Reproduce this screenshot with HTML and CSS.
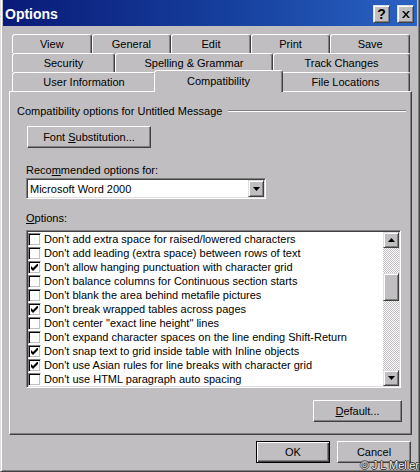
FILE: index.html
```html
<!DOCTYPE html>
<html lang="en">
<head>
  <meta charset="UTF-8" />
  <title>Options</title>
  <link rel="stylesheet" href="styles.css">
</head>
<body>
  <div class="window">
    <div class="titlebar">
      <span class="title">Options</span>
      <div class="caption-buttons">
        <div class="cap-btn help">?</div>
        <div class="cap-btn">
          <svg width="8" height="7" viewBox="0 0 8 7"><path d="M0 0h2l2 2.5l2-2.5h2l-3 3.5l3 3.5h-2l-2-2.5l-2 2.5h-2l3-3.5z"/></svg>
        </div>
      </div>
    </div>

    <div class="content">
      <div class="tabs">
        <div class="tab-row row-top">
          <div class="tab">View</div>
          <div class="tab">General</div>
          <div class="tab">Edit</div>
          <div class="tab">Print</div>
          <div class="tab">Save</div>
        </div>
        <div class="tab-row row-mid">
          <div class="tab">Security</div>
          <div class="tab">Spelling &amp; Grammar</div>
          <div class="tab">Track Changes</div>
        </div>
        <div class="tab-row row-bottom">
          <div class="tab">User Information</div>
          <div class="tab active">Compatibility</div>
          <div class="tab">File Locations</div>
        </div>
      </div>

      <div class="panel">
        <div class="group-title">
          <span>Compatibility options for Untitled Message</span>
          <span class="rule"></span>
        </div>

        <div class="btn btn-font"><span>Font <u>S</u>ubstitution...</span></div>

        <div class="field-label label-rec">Reco<u>m</u>mended options for:</div>
        <div class="combo">
          <span class="combo-text">Microsoft Word 2000</span>
          <span class="combo-btn">
            <svg width="7" height="4" viewBox="0 0 7 4"><polygon points="0,0 7,0 3.5,4"/></svg>
          </span>
        </div>

        <div class="field-label label-opts"><u>O</u>ptions:</div>
        <div class="listbox">
          <ul class="opt-list">
            <li><span class="checkbox"></span><span>Don't add extra space for raised/lowered characters</span></li>
            <li><span class="checkbox"></span><span>Don't add leading (extra space) between rows of text</span></li>
            <li><span class="checkbox checked"><svg width="7" height="7" viewBox="0 0 7 7"><polygon points="0,2 2,4 6,0 7,0 7,2 2,7 0,5"/></svg></span><span>Don't allow hanging punctuation with character grid</span></li>
            <li><span class="checkbox"></span><span>Don't balance columns for Continuous section starts</span></li>
            <li><span class="checkbox"></span><span>Don't blank the area behind metafile pictures</span></li>
            <li><span class="checkbox checked"><svg width="7" height="7" viewBox="0 0 7 7"><polygon points="0,2 2,4 6,0 7,0 7,2 2,7 0,5"/></svg></span><span>Don't break wrapped tables across pages</span></li>
            <li><span class="checkbox"></span><span>Don't center "exact line height" lines</span></li>
            <li><span class="checkbox"></span><span>Don't expand character spaces on the line ending Shift-Return</span></li>
            <li><span class="checkbox checked"><svg width="7" height="7" viewBox="0 0 7 7"><polygon points="0,2 2,4 6,0 7,0 7,2 2,7 0,5"/></svg></span><span>Don't snap text to grid inside table with Inline objects</span></li>
            <li><span class="checkbox checked"><svg width="7" height="7" viewBox="0 0 7 7"><polygon points="0,2 2,4 6,0 7,0 7,2 2,7 0,5"/></svg></span><span>Don't use Asian rules for line breaks with character grid</span></li>
            <li><span class="checkbox"></span><span>Don't use HTML paragraph auto spacing</span></li>
          </ul>
          <div class="scrollbar">
            <div class="sb-btn">
              <svg width="7" height="4" viewBox="0 0 7 4"><polygon points="0,4 7,4 3.5,0"/></svg>
            </div>
            <div class="sb-track">
              <div class="sb-thumb"></div>
            </div>
            <div class="sb-btn">
              <svg width="7" height="4" viewBox="0 0 7 4"><polygon points="0,0 7,0 3.5,4"/></svg>
            </div>
          </div>
        </div>

        <div class="btn btn-default"><span><u>D</u>efault...</span></div>
      </div>

      <div class="dialog-buttons">
        <div class="btn btn-ok">OK</div>
        <div class="btn btn-cancel">Cancel</div>
      </div>
    </div>

    <div class="credit">© J L Meller</div>
  </div>
</body>
</html>
```

FILE: styles.css
```css
* {
  box-sizing: border-box;
}
body {
  margin: 0;
  width: 420px;
  height: 472px;
  overflow: hidden;
  background: #c1bec1;
  font-family: "Liberation Sans", Arial, sans-serif;
  font-size: 11px;
  color: #000;
}
.window {
  position: relative;
  height: 472px;
  padding: 0 2px;
  border-left: 1px solid #dfdfdf;
  border-right: 1px solid #404040;
  border-bottom: 1px solid #404040;
  box-shadow: inset 1px 0 #fff, inset -1px -1px #808080;
}

/* title bar */
.titlebar {
  height: 26px;
  display: flex;
  justify-content: space-between;
  padding: 0 3px 0 2px;
  background: linear-gradient(90deg, #0a1a78 0%, #16409e 55%, #2a62c4 100%);
  color: #fff;
}
.title {
  margin-top: 6px;
  font-size: 14px;
  font-weight: bold;
  line-height: 16px;
}
.caption-buttons {
  display: flex;
  gap: 7px;
  margin-top: 5px;
}
.cap-btn {
  width: 17px;
  height: 18px;
  display: flex;
  align-items: center;
  justify-content: center;
  background: #c1bec1;
  color: #000;
  border: 1px solid;
  border-color: #dfdfdf #404040 #404040 #dfdfdf;
  box-shadow: inset 1px 1px #fff, inset -1px -1px #808080;
}
.cap-btn.help {
  font-size: 14px;
  font-weight: bold;
  line-height: 14px;
}

/* tabs */
.content {
  padding: 0 5px 0 6px;
}
.tabs {
  margin: 8px 2px 0 3px;
}
.tab-row {
  display: grid;
  height: 19px;
}
.row-top {
  grid-template-columns: repeat(5, 1fr);
}
.row-mid {
  grid-template-columns: 103px 158px 1fr;
}
.row-bottom {
  grid-template-columns: 144px 125px 1fr;
}
.tab {
  background: #c1bec1;
  border-top: 1px solid #fff;
  border-left: 1px solid #fff;
  border-right: 1px solid #404040;
  border-radius: 3px 3px 0 0;
  box-shadow: inset -1px 0 #808080;
  padding-top: 3px;
  line-height: 13px;
  text-align: center;
  white-space: nowrap;
}
.tab.active {
  position: relative;
  z-index: 1;
  margin: -2px -2px -1px;
  padding-top: 4px;
}

/* panel */
.panel {
  height: 344px;
  display: flex;
  flex-direction: column;
  align-items: flex-start;
  border: 1px solid;
  border-color: #fff #404040 #404040 #fff;
  box-shadow: inset -1px -1px #808080;
}
.group-title {
  align-self: stretch;
  display: flex;
  align-items: center;
  gap: 6px;
  margin: 12px 5px 0 7px;
  line-height: 14px;
}
.group-title .rule {
  flex: 1;
  border-top: 1px solid #808080;
  border-bottom: 1px solid #fff;
}
.btn {
  display: flex;
  align-items: center;
  justify-content: center;
  height: 22px;
  background: #c1bec1;
  border: 1px solid;
  border-color: #fff #404040 #404040 #fff;
  box-shadow: inset -1px -1px #808080;
  white-space: pre;
}
.btn-font {
  width: 124px;
  margin: 8px 0 0 17px;
}
.field-label {
  margin-left: 16px;
  line-height: 14px;
}
.label-rec {
  margin-top: 15px;
}
.label-opts {
  margin-top: 12px;
}
.combo {
  display: flex;
  align-items: center;
  width: 240px;
  height: 21px;
  margin: 1px 0 0 16px;
  background: #fff;
  border: 1px solid;
  border-color: #808080 #fff #fff #808080;
  box-shadow: inset 1px 1px #404040, inset -1px -1px #dfdfdf;
  padding: 1px 1px 1px 3px;
}
.combo-text {
  flex: 1;
}
.combo-btn,
.sb-btn {
  width: 16px;
  height: 17px;
  display: flex;
  align-items: center;
  justify-content: center;
  background: #c1bec1;
  border: 1px solid;
  border-color: #dfdfdf #404040 #404040 #dfdfdf;
  box-shadow: inset 1px 1px #fff, inset -1px -1px #808080;
}

/* options list */
.listbox {
  display: flex;
  width: 375px;
  height: 158px;
  margin: 5px 0 0 16px;
  background: #fff;
  border: 1px solid;
  border-color: #808080 #fff #fff #808080;
  box-shadow: inset 1px 1px #404040, inset -1px -1px #dfdfdf;
  padding: 1px;
}
.opt-list {
  flex: 1;
  list-style: none;
  margin: 0;
  padding: 0;
  overflow: hidden;
}
.opt-list li {
  display: flex;
  align-items: center;
  gap: 3px;
  height: 14px;
  white-space: nowrap;
}
.checkbox {
  flex: none;
  width: 13px;
  height: 13px;
  display: flex;
  align-items: center;
  justify-content: center;
  background: #fff;
  border: 1px solid;
  border-color: #808080 #fff #fff #808080;
  box-shadow: inset 1px 1px #000, inset -1px -1px #c1bec1;
}
.scrollbar {
  width: 16px;
  display: flex;
  flex-direction: column;
}
.sb-btn {
  height: 16px;
}
.sb-track {
  flex: 1;
  background: repeating-conic-gradient(#c1bec1 0 25%, #fff 0 50%) 0 0 / 2px 2px;
}
.sb-thumb {
  height: 28px;
  margin-top: 25px;
  background: #c1bec1;
  border: 1px solid;
  border-color: #dfdfdf #404040 #404040 #dfdfdf;
  box-shadow: inset 1px 1px #fff, inset -1px -1px #808080;
}
.btn-default {
  width: 89px;
  margin: 12px 0 0 303px;
}

/* bottom buttons */
.dialog-buttons {
  display: flex;
  justify-content: flex-end;
  gap: 7px;
  margin: 6px 1px 0 0;
}
.dialog-buttons .btn {
  width: 74px;
  height: 22px;
}
.btn-ok {
  border: 1px solid #000;
  box-shadow: inset 1px 1px #fff, inset -1px -1px #404040, inset -2px -2px #808080;
}
.credit {
  position: absolute;
  right: 0;
  bottom: 0;
  font-size: 11px;
  line-height: 11px;
  color: #f0f0f0;
  text-shadow: -1px 0 #333, 1px 0 #333, 0 -1px #333, 0 1px #333;
}
```
